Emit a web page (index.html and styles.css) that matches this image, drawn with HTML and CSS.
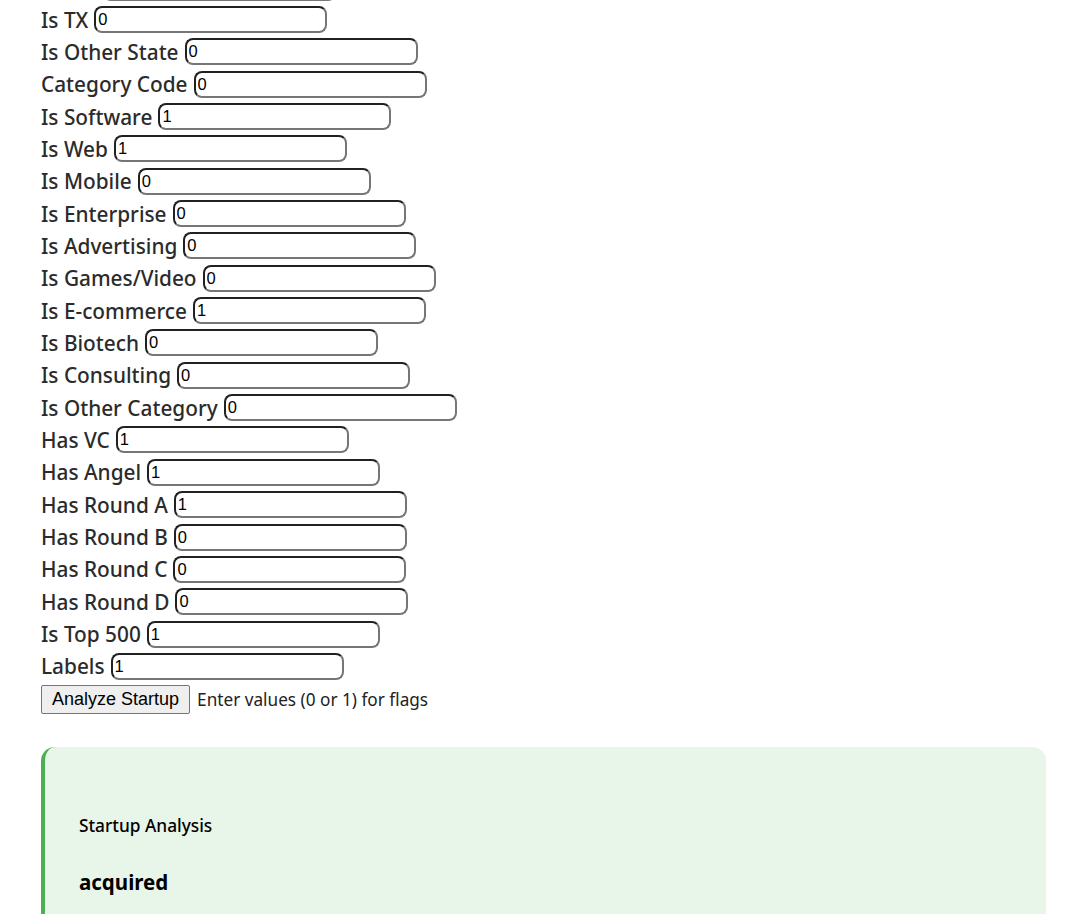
FILE: index.html
```html
<!DOCTYPE html>
<html>
<head>
<meta charset="utf-8">
<link rel="stylesheet" href="styles.css">
</head>
<body>
<div class="page">
  <form class="form">
    <div class="row"><label>Is MA</label><input value="0"></div>
    <div class="row"><label>Is TX</label><input value="0"></div>
    <div class="row"><label>Is Other State</label><input value="0"></div>
    <div class="row"><label>Category Code</label><input value="0"></div>
    <div class="row"><label>Is Software</label><input value="1"></div>
    <div class="row"><label>Is Web</label><input value="1"></div>
    <div class="row"><label>Is Mobile</label><input value="0"></div>
    <div class="row"><label>Is Enterprise</label><input value="0"></div>
    <div class="row"><label>Is Advertising</label><input value="0"></div>
    <div class="row"><label>Is Games/Video</label><input value="0"></div>
    <div class="row"><label>Is E-commerce</label><input value="1"></div>
    <div class="row"><label>Is Biotech</label><input value="0"></div>
    <div class="row"><label>Is Consulting</label><input value="0"></div>
    <div class="row"><label>Is Other Category</label><input value="0"></div>
    <div class="row"><label>Has VC</label><input value="1"></div>
    <div class="row"><label>Has Angel</label><input value="1"></div>
    <div class="row"><label>Has Round A</label><input value="1"></div>
    <div class="row"><label>Has Round B</label><input value="0"></div>
    <div class="row"><label>Has Round C</label><input value="0"></div>
    <div class="row"><label>Has Round D</label><input value="0"></div>
    <div class="row"><label>Is Top 500</label><input value="1"></div>
    <div class="row"><label>Labels</label><input value="1"></div>
    <div class="actions">
      <button type="button" class="btn">Analyze Startup</button>
      <span class="hint">Enter values (0 or 1) for flags</span>
    </div>
  </form>
  <div class="result">
    <h3 class="result-title">Startup Analysis</h3>
    <p class="result-value">acquired</p>
  </div>
</div>
</body>
</html>
```
FILE: styles.css
```css
html, body {
  margin: 0;
  padding: 0;
  background: #fff;
  overflow: hidden;
}
.page {
  padding: 0 38px 0 41px;
  font-family: "Noto Sans", "Open Sans", sans-serif;
  color: #333;
}
.form {
  margin-top: -29px;
}
.row {
  display: flex;
  align-items: center;
  height: 32.35px;
}
.row label {
  font-size: 20.8px;
  font-weight: 500;
  color: #2b2b2b;
  margin-right: 6px;
  white-space: nowrap;
}
.row input {
  box-sizing: border-box;
  width: 233px;
  height: 27px;
  border: 2px inset #767676;
  border-radius: 8px;
  padding: 0 2px;
  font-family: "Liberation Sans", Arial, sans-serif;
  font-size: 16.5px;
  color: #000;
  background: #fff;
}
.actions {
  display: flex;
  align-items: center;
  margin-top: 2px;
}
.btn {
  font-family: "Liberation Sans", Arial, sans-serif;
  font-size: 18px;
  color: #000;
  background: #efefef;
  border: 1px solid #767676;
  border-radius: 2px;
  padding: 0 10px;
  height: 29px;
  margin-right: 7px;
}
.hint {
  font-size: 17.2px;
  color: #222;
}
.result {
  margin-top: 33px;
  background: #e8f5e9;
  border-left: 4px solid #4caf50;
  border-radius: 14px;
  padding: 67px 34px 20px;
  min-height: 200px;
}
.result-title {
  margin: 0 0 31px;
  font-size: 17.3px;
  font-weight: 500;
  color: #000;
}
.result-value {
  margin: 0;
  font-size: 20.5px;
  font-weight: 700;
  color: #000;
}
```
